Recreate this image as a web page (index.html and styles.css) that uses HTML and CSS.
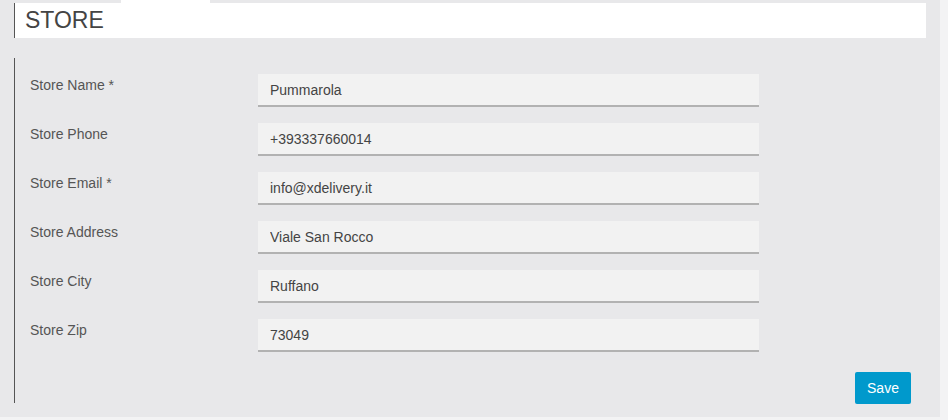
FILE: index.html
```html
<!DOCTYPE html>
<html>
<head>
<meta charset="utf-8">
<link rel="stylesheet" href="styles.css">
</head>
<body>
<div class="page">
  <div class="tabs"><span class="tab"></span></div>
  <div class="header"><h1 class="title">STORE</h1></div>
  <form class="form">
    <div class="row"><label class="label">Store Name *</label><input class="field" type="text" value="Pummarola"></div>
    <div class="row"><label class="label">Store Phone</label><input class="field" type="text" value="+393337660014"></div>
    <div class="row"><label class="label">Store Email *</label><input class="field" type="text" value="info@xdelivery.it"></div>
    <div class="row"><label class="label">Store Address</label><input class="field" type="text" value="Viale San Rocco"></div>
    <div class="row"><label class="label">Store City</label><input class="field" type="text" value="Ruffano"></div>
    <div class="row"><label class="label">Store Zip</label><input class="field" type="text" value="73049"></div>
    <div class="actions"><button class="save" type="button">Save</button></div>
  </form>
</div>
</body>
</html>
```
FILE: styles.css
```css
html, body {
  margin: 0;
  padding: 0;
  background: #f3f3f4;
  font-family: "Liberation Sans", Arial, sans-serif;
}
.page {
  width: 940px;
  height: 417px;
  background: #e8e8ea;
  display: flex;
  flex-direction: column;
}
.tabs {
  height: 3px;
  display: flex;
}
.tab {
  margin-left: 121px;
  width: 89px;
  height: 3px;
  background: #ffffff;
}
.header {
  margin-left: 14px;
  width: 912px;
  height: 35px;
  box-sizing: border-box;
  background: #ffffff;
  border-left: 1px solid #555555;
  display: flex;
  align-items: center;
  padding-left: 10px;
}
.title {
  margin: 0;
  font-weight: normal;
  font-size: 23px;
  line-height: 26px;
  color: #444444;
  padding-bottom: 1px;
}
.form {
  margin: 20px 0 0 14px;
  width: 912px;
  height: 345px;
  box-sizing: border-box;
  border-left: 1px solid #555555;
  padding: 16px 15px 0 15px;
  display: flex;
  flex-direction: column;
  gap: 16px;
}
.row {
  display: grid;
  grid-template-columns: 228px 501px;
  align-items: start;
}
.label {
  padding-top: 3px;
  font-size: 14px;
  line-height: 16px;
  color: #555555;
}
.field {
  box-sizing: border-box;
  height: 33px;
  margin: 0;
  padding: 0 12px;
  border: none;
  border-bottom: 2px solid #b2b2b2;
  background: #f2f2f2;
  font-family: "Liberation Sans", Arial, sans-serif;
  font-size: 14px;
  color: #444444;
  outline: none;
}
.actions {
  display: flex;
  justify-content: flex-end;
  margin-top: 4px;
}
.save {
  width: 56px;
  height: 32px;
  margin: 0;
  padding: 0;
  border: none;
  border-radius: 2px;
  background: #0099cc;
  color: #ffffff;
  font-family: "Liberation Sans", Arial, sans-serif;
  font-size: 14px;
}
```
